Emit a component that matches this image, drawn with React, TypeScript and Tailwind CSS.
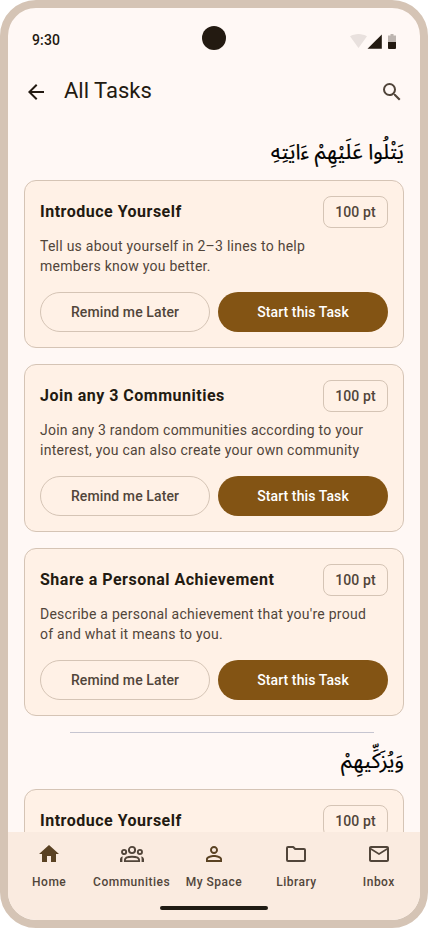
import type { ReactNode } from "react";
import { MdArrowBack, MdHome, MdMailOutline, MdPersonOutline, MdSearch } from "react-icons/md";

const tasks = [
  {
    title: "Introduce Yourself",
    lines: ["Tell us about yourself in 2–3 lines to help", "members know you better."],
  },
  {
    title: "Join any 3 Communities",
    lines: [
      "Join any 3 random communities according to your",
      "interest, you can also create your own community",
    ],
  },
  {
    title: "Share a Personal Achievement",
    lines: ["Describe a personal achievement that you're proud", "of and what it means to you."],
  },
];

function CommunitiesIcon() {
  return (
    <svg width="24" height="24" viewBox="0 0 24 24" fill="none" stroke="currentColor" strokeWidth="1.9">
      <circle cx="12" cy="8" r="3.1" />
      <circle cx="4.1" cy="10" r="2.1" />
      <circle cx="19.9" cy="10" r="2.1" />
      <path d="M4.9 19.1v-1c0-2.1 3.3-3.3 7.1-3.3s7.1 1.2 7.1 3.3v1z" />
      <path d="M0 20v-2.4c0-1.7 1-3 2.9-3.2-.5 1-.5 1.8-.5 3.2V20zM24 20v-2.4c0-1.7-1-3-2.9-3.2.5 1 .5 1.8.5 3.2V20z" fill="currentColor" stroke="none" />
    </svg>
  );
}

function FolderIcon() {
  return (
    <svg width="24" height="24" viewBox="0 0 24 24" fill="none" stroke="currentColor" strokeWidth="2" strokeLinejoin="round">
      <path d="M4 5h5.2l2 2H20q1 0 1 1v10q0 1-1 1H4q-1 0-1-1V6q0-1 1-1z" />
    </svg>
  );
}

function StatusBar() {
  return (
    <div className="relative flex h-[52px] shrink-0 items-end justify-between px-6 pb-[10px]">
      <span className="text-sm font-medium leading-5 tracking-[0.14px]">9:30</span>
      <div className="absolute left-[194px] top-[18px] size-6 rounded-full bg-[#231a11]" />
      <svg width="46" height="20" viewBox="0 0 46 20" className="shrink-0">
        <path d="M0 6.2C2.5 5 5.2 4 8.5 4s6 1 8.5 2.2L8.5 18z" fill="#231a11" opacity="0.1" />
        <path d="M17.5 18.8 31.8 4.4v14.4z" fill="#231a11" />
        <path d="M38 5.5h2.5V4h3v1.5H46V12h-8z" fill="#231a11" opacity="0.3" />
        <path d="M38 12h8v6.1q0 .9-.9.9h-6.2q-.9 0-.9-.9z" fill="#231a11" />
      </svg>
    </div>
  );
}

function SectionTitle({ children }: { children: ReactNode }) {
  return (
    <h2
      dir="rtl"
      className="h-8 whitespace-nowrap pt-px font-['Noto_Sans_Arabic','Noto_Sans','DejaVu_Sans',sans-serif] text-[21.3px] leading-8 text-black [-webkit-text-stroke:0.2px_black]"
    >
      {children}
    </h2>
  );
}

function TaskCard({ title, lines }: { title: string; lines: string[] }) {
  return (
    <article className="h-[168px] shrink-0 rounded-xl border border-[#d5c4b5] bg-[#fff1e6] p-[15px]">
      <div className="flex h-8 items-center justify-between">
        <h3 className="text-base font-bold tracking-[0.5px]">{title}</h3>
        <span className="flex h-8 w-[65px] items-center justify-center rounded-lg border border-[#d5c4b5] text-sm font-medium tracking-[0.1px] text-[#51453a]">
          100 pt
        </span>
      </div>
      <p className="mt-2 whitespace-nowrap text-sm leading-5 tracking-[0.25px] text-[#51453a]">
        {lines[0]}
        <br />
        {lines[1]}
      </p>
      <div className="mt-4 grid grid-cols-2 gap-2">
        <button className="h-10 rounded-full border border-[#d5c4b5] text-sm font-medium tracking-[0.1px] text-[#51453a]">
          Remind me Later
        </button>
        <button className="h-10 rounded-full bg-[#835414] text-sm font-medium tracking-[0.1px] text-white">
          Start this Task
        </button>
      </div>
    </article>
  );
}

function NavItem({ label, icon }: { label: string; icon: ReactNode }) {
  return (
    <div className="flex flex-1 flex-col items-center gap-2 pt-[10px]">
      {icon}
      <span className="whitespace-nowrap text-xs font-medium leading-4 tracking-[0.5px]">{label}</span>
    </div>
  );
}

export default function App() {
  return (
    <div className="h-[928px] w-[428px] bg-white font-[Roboto,sans-serif] text-[#231a11]">
      <div className="flex h-full flex-col overflow-hidden rounded-[36px] border-8 border-[#d5c4b5] bg-[#fff8f5]">
        <StatusBar />

        <header className="flex h-16 shrink-0 items-center px-4">
          <MdArrowBack size={24} />
          <h1 className="mb-0.5 ml-4 flex-1 text-[22px] leading-7">All Tasks</h1>
          <MdSearch size={24} className="text-[#51453a]" />
        </header>

        <main className="flex min-h-0 flex-1 flex-col overflow-hidden px-4 pt-3">
          <SectionTitle>يَتْلُوا عَلَيْهِمْ ءَايَتِهِ</SectionTitle>
          <div className="mt-3 flex shrink-0 flex-col gap-4">
            {tasks.map((task) => (
              <TaskCard key={task.title} {...task} />
            ))}
          </div>
          <div className="ml-[46px] mt-4 w-[304px] shrink-0 border-t border-[#c6c5d0]" />
          <div className="mt-3">
            <SectionTitle>وَيُزَكِّيهِمْ</SectionTitle>
          </div>
          <div className="mt-3">
            <TaskCard {...tasks[0]} />
          </div>
        </main>

        <footer className="h-[88px] shrink-0 bg-[#faebe0] text-[#51453a]">
          <nav className="flex h-16">
            <NavItem label="Home" icon={<MdHome size={24} className="text-[#5a4223]" />} />
            <NavItem label="Communities" icon={<CommunitiesIcon />} />
            <NavItem label="My Space" icon={<MdPersonOutline size={24} className="text-[#5a4223]" />} />
            <NavItem label="Library" icon={<FolderIcon />} />
            <NavItem label="Inbox" icon={<MdMailOutline size={24} />} />
          </nav>
          <div className="mx-auto mt-[10px] h-1 w-[108px] rounded-full bg-[#1f1b13]" />
        </footer>
      </div>
    </div>
  );
}
